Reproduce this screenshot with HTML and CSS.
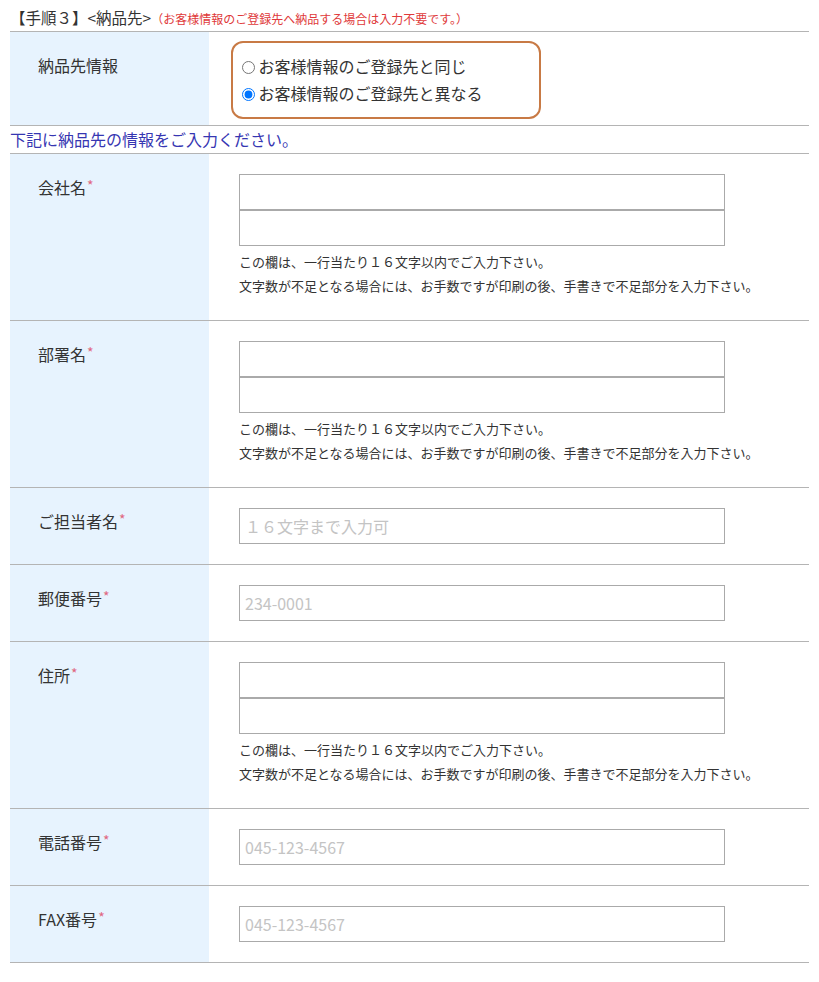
FILE: index.html
```html
<html>
<head>
<meta charset="utf-8">
<title>納品先</title>
<link rel="stylesheet" href="styles.css">
</head>
<body>
<div class="wrap">

<div class="step">【手順３】&lt;納品先&gt;<span class="step-note">（お客様情報のご登録先へ納品する場合は入力不要です。）</span></div>

<div class="row">
  <div class="label">納品先情報</div>
  <div class="field field-choice">
    <div class="choice">
      <label><input type="radio" name="dest"> お客様情報のご登録先と同じ</label>
      <label><input type="radio" name="dest" checked> お客様情報のご登録先と異なる</label>
    </div>
  </div>
</div>

<p class="lead">下記に納品先の情報をご入力ください。</p>

<div class="row">
  <div class="label">会社名<span class="req">*</span></div>
  <div class="field">
    <input type="text" class="text">
    <input type="text" class="text">
    <div class="notes">
      <p>この欄は、一行当たり１６文字以内でご入力下さい。</p>
      <p>文字数が不足となる場合には、お手数ですが印刷の後、手書きで不足部分を入力下さい。</p>
    </div>
  </div>
</div>

<div class="row">
  <div class="label">部署名<span class="req">*</span></div>
  <div class="field">
    <input type="text" class="text">
    <input type="text" class="text">
    <div class="notes">
      <p>この欄は、一行当たり１６文字以内でご入力下さい。</p>
      <p>文字数が不足となる場合には、お手数ですが印刷の後、手書きで不足部分を入力下さい。</p>
    </div>
  </div>
</div>

<div class="row">
  <div class="label">ご担当者名<span class="req">*</span></div>
  <div class="field">
    <input type="text" class="text" placeholder="１６文字まで入力可">
  </div>
</div>

<div class="row">
  <div class="label">郵便番号<span class="req">*</span></div>
  <div class="field">
    <input type="text" class="text" placeholder="234-0001">
  </div>
</div>

<div class="row">
  <div class="label">住所<span class="req">*</span></div>
  <div class="field">
    <input type="text" class="text">
    <input type="text" class="text">
    <div class="notes">
      <p>この欄は、一行当たり１６文字以内でご入力下さい。</p>
      <p>文字数が不足となる場合には、お手数ですが印刷の後、手書きで不足部分を入力下さい。</p>
    </div>
  </div>
</div>

<div class="row">
  <div class="label">電話番号<span class="req">*</span></div>
  <div class="field">
    <input type="text" class="text" placeholder="045-123-4567">
  </div>
</div>

<div class="row">
  <div class="label">FAX番号<span class="req">*</span></div>
  <div class="field">
    <input type="text" class="text" placeholder="045-123-4567">
  </div>
</div>

</div>
</body>
</html>
```

FILE: styles.css
```css
body {
  margin: 0;
  font-family: "Noto Sans CJK JP", "Noto Sans", sans-serif;
  color: #333;
  background: white;
}
.wrap { margin: 0 10px; }

/* step heading above the table */
.step {
  padding: 6px 0 1px 0;
  line-height: 22px;
  font-size: 15.5px;
  border-bottom: 1px solid #b4b4b4;
}
.step-note { font-size: 12px; color: #e0393a; }

.row {
  display: flex;
  border-bottom: 1px solid #b4b4b4;
}
.label {
  width: 171px;
  flex: none;
  padding: 22px 0 0 28px;
  line-height: 22px;
  font-size: 16px;
  background: #e7f3fe;
}
.req {
  color: #e06680;
  font-size: 14px;
  vertical-align: top;
  line-height: 18px;
  margin-left: 1px;
}
.field { flex: 1; padding: 20px 0 20px 30px; }

.field-choice { padding: 9px 0 6px 22px; }
.choice {
  width: 288px;
  padding: 10px 9px;
  border: 2px solid #c87a45;
  border-radius: 12px;
}
.choice label {
  display: block;
  line-height: 27px;
  font-size: 16px;
}
.choice input { margin: 0; width: 13px; height: 13px; vertical-align: -1px; }

.lead {
  margin: 0;
  line-height: 27px;
  font-size: 16px;
  color: #3636b2;
  border-bottom: 1px solid #b4b4b4;
}

input.text {
  display: block;
  box-sizing: border-box;
  width: 486px;
  height: 36px;
  margin: 0;
  padding: 0 5px;
  border: 1px solid #aaa;
  border-radius: 0;
  font-family: inherit;
  font-size: 16px;
  color: #333;
}
input.text::placeholder { color: #c4c4c4; }

.notes { margin: 4px 0 2px 0; }
.notes p { margin: 0; line-height: 24px; font-size: 13px; }
```
